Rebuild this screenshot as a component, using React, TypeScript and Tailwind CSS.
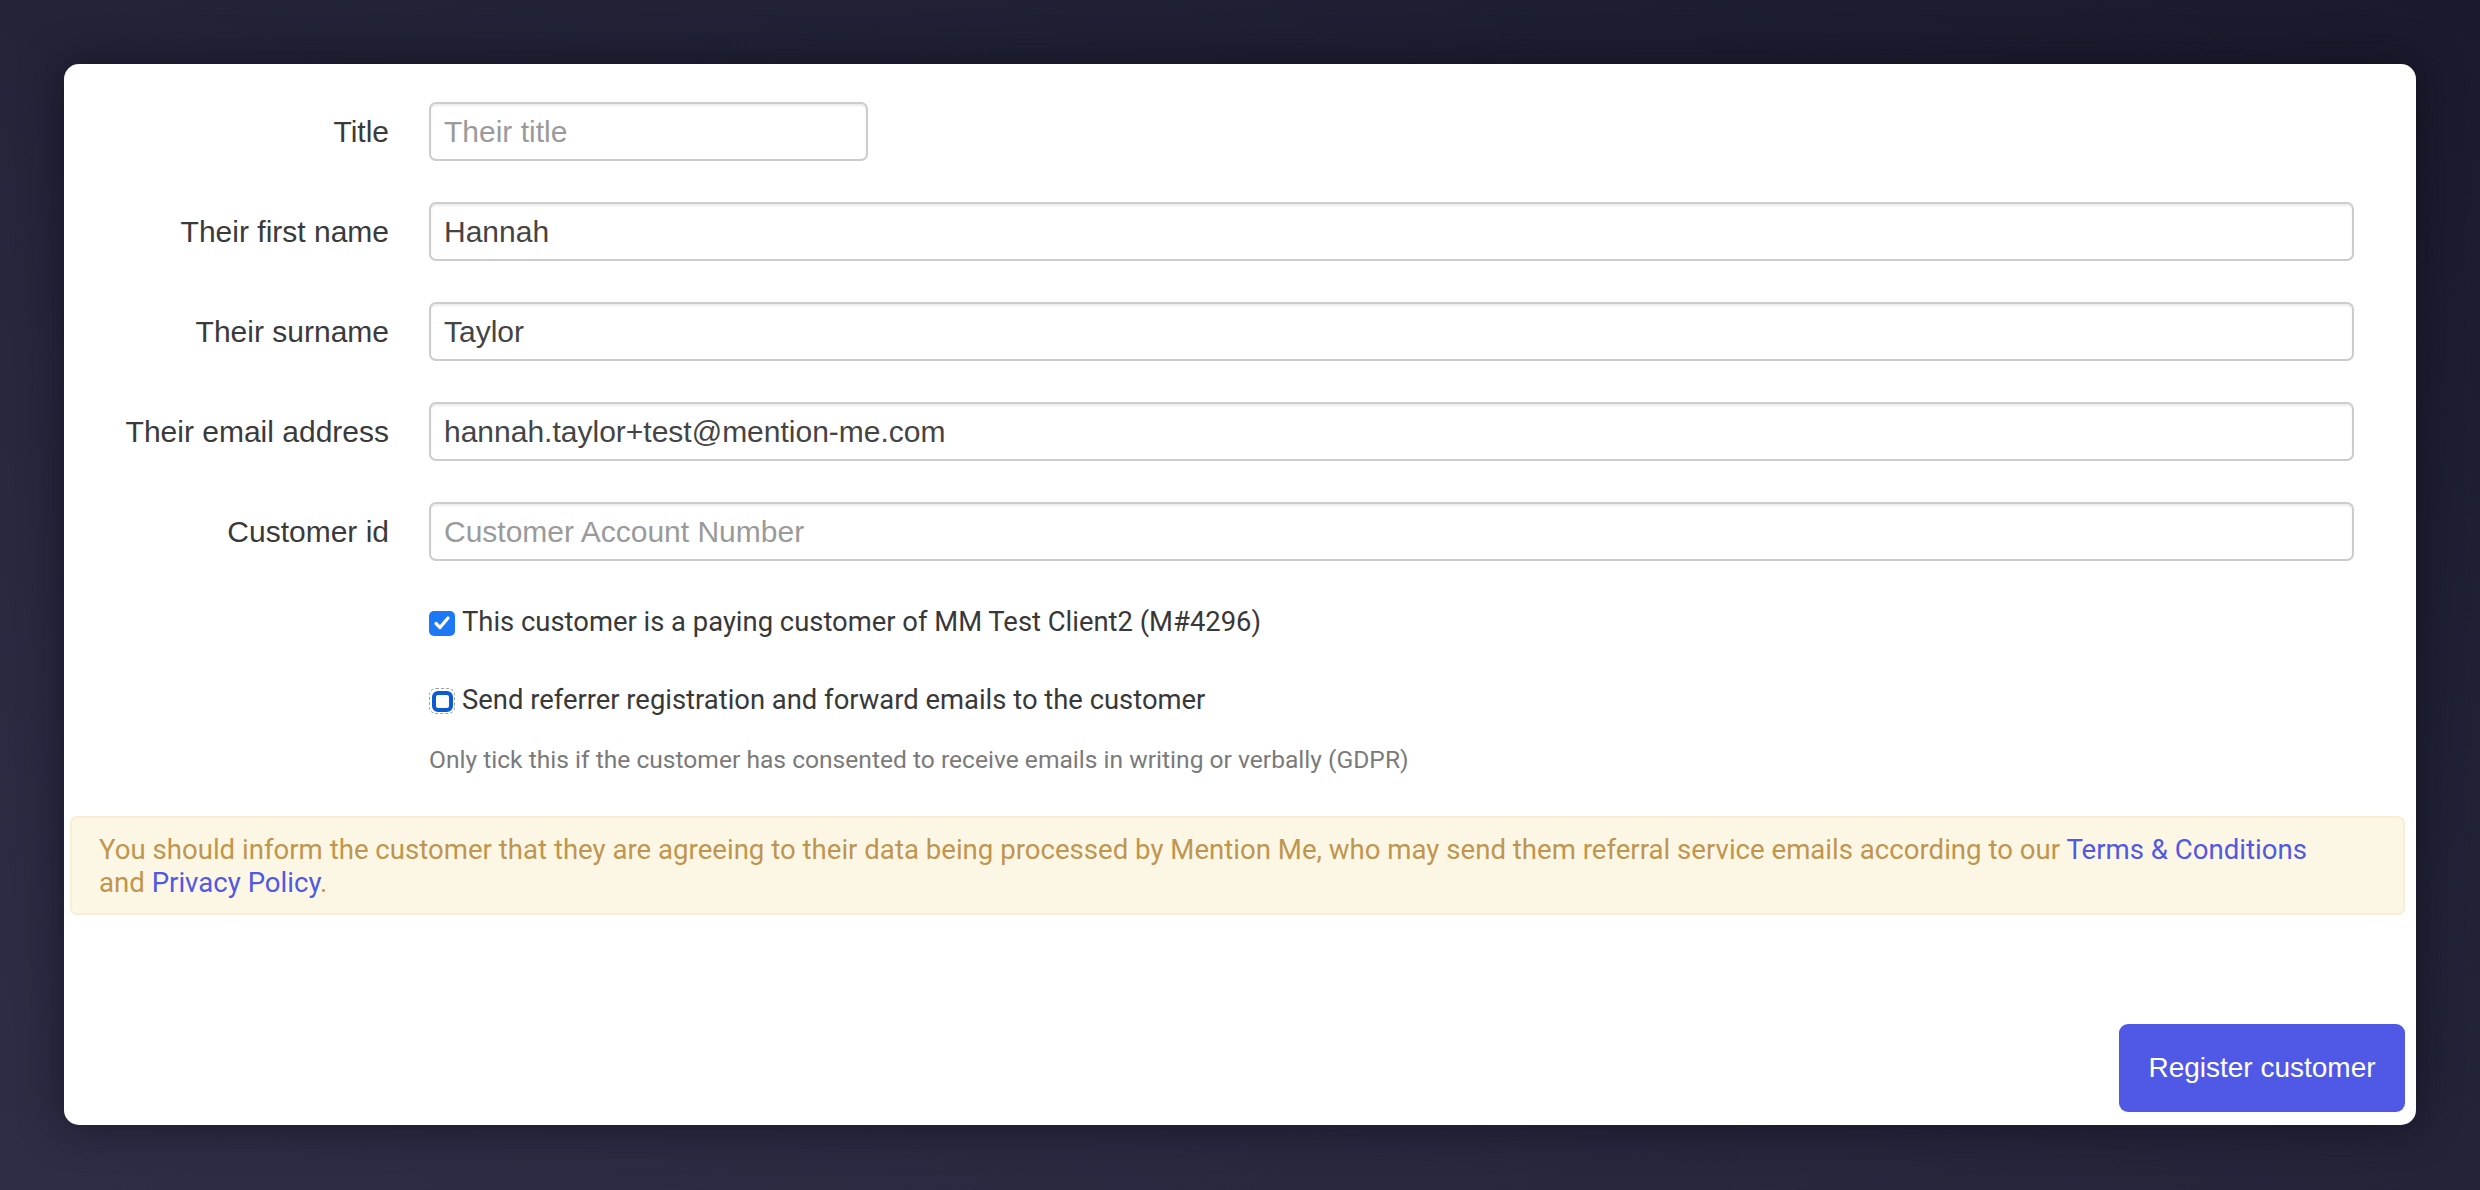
import React from "react";

const labelFont = { fontFamily: '"Liberation Sans", Arial, sans-serif' } as React.CSSProperties;

function Row({ label, value, placeholder, narrow }: { label: string; value?: string; placeholder?: string; narrow?: boolean }) {
  return (
    <div className="flex items-center h-[59px] mb-[41px] last:mb-0">
      <div className="w-[325px] shrink-0 pr-0 text-right text-[30px] text-[#3a3a3a] leading-none" style={labelFont}>
        {label}
      </div>
      <div className={narrow ? "ml-[40px] w-[439px]" : "ml-[40px] flex-1 mr-[62px]"}>
        <div
          className="h-[59px] w-full rounded-[7px] border-2 border-[#cccccc] bg-white shadow-[inset_0_2px_2px_rgba(0,0,0,0.075)] flex items-center px-[13px] text-[30px] leading-none"
          style={labelFont}
        >
          {value ? (
            <span className="text-[#444444]">{value}</span>
          ) : (
            <span className="text-[#9a9a9a]">{placeholder}</span>
          )}
        </div>
      </div>
    </div>
  );
}

export default function App() {
  return (
    <div className="w-full min-h-[1190px] bg-[linear-gradient(to_bottom_left,#1b1a2c,#2d2e46)] p-[64px]">
      <div className="w-full rounded-[15px] bg-white shadow-[0_0_40px_rgba(10,10,25,0.6)] flex flex-col pt-[38px] pb-[13px]">
        <div>
          <Row label="Title" placeholder="Their title" narrow />
          <Row label="Their first name" value="Hannah" />
          <Row label="Their surname" value="Taylor" />
          <Row label="Their email address" value="hannah.taylor+test@mention-me.com" />
          <Row label="Customer id" placeholder="Customer Account Number" />
        </div>

        <div className="ml-[365px] mt-[42px]" style={{ fontFamily: 'Roboto, "Noto Sans", sans-serif' }}>
          <div className="flex items-center h-[40px]">
            <span className="w-[26px] h-[25px] rounded-[5px] bg-[#1d78f6] flex items-center justify-center shrink-0">
              <svg width="18" height="16" viewBox="0 0 18 16" fill="none">
                <path d="M3 8.5 L7 12.5 L15 3" stroke="white" strokeWidth="3.2" strokeLinecap="round" strokeLinejoin="round" />
              </svg>
            </span>
            <span className="ml-[7px] text-[27.4px] text-[#383838] leading-none">
              This customer is a paying customer of MM Test Client2 (M#4296)
            </span>
          </div>
          <div className="flex items-center h-[40px] mt-[38px]">
            <span className="relative w-[26px] h-[26px] shrink-0 flex items-center justify-center">
              <span className="absolute inset-0 rounded-[7px] border border-dashed border-[#9aa0a8]" />
              <span className="w-[21px] h-[21px] rounded-[6px] border-[4px] border-[#0b5bd3] bg-white" />
            </span>
            <span className="ml-[7px] text-[27.4px] text-[#383838] leading-none">
              Send referrer registration and forward emails to the customer
            </span>
          </div>
          <div className="mt-[23px] h-[32px] flex items-center text-[24.6px] text-[#7a7a7a] leading-none">
            Only tick this if the customer has consented to receive emails in writing or verbally (GDPR)
          </div>
        </div>

        <div
          className="ml-[6px] mr-[11px] mt-[40px] rounded-[7px] border-2 border-[#f9eed3] bg-[#fcf7e4] pl-[27px] pr-[60px] py-[14.5px] text-[27.6px] leading-[33px] text-[#c0954f]"
          style={{ fontFamily: 'Roboto, "Noto Sans", sans-serif' }}
        >
          You should inform the customer that they are agreeing to their data being processed by Mention Me, who may send them referral service emails according to our{" "}
          <a className="text-[#5158e3]">Terms &amp; Conditions</a> and <a className="text-[#5158e3]">Privacy Policy</a>.
        </div>

        <div className="flex justify-end mr-[11px] mt-[109px]">
          <button
            className="w-[286px] h-[88px] rounded-[9px] bg-[#4f59e6] text-white text-[28px] leading-none"
            style={labelFont}
          >
            Register customer
          </button>
        </div>
      </div>
    </div>
  );
}
